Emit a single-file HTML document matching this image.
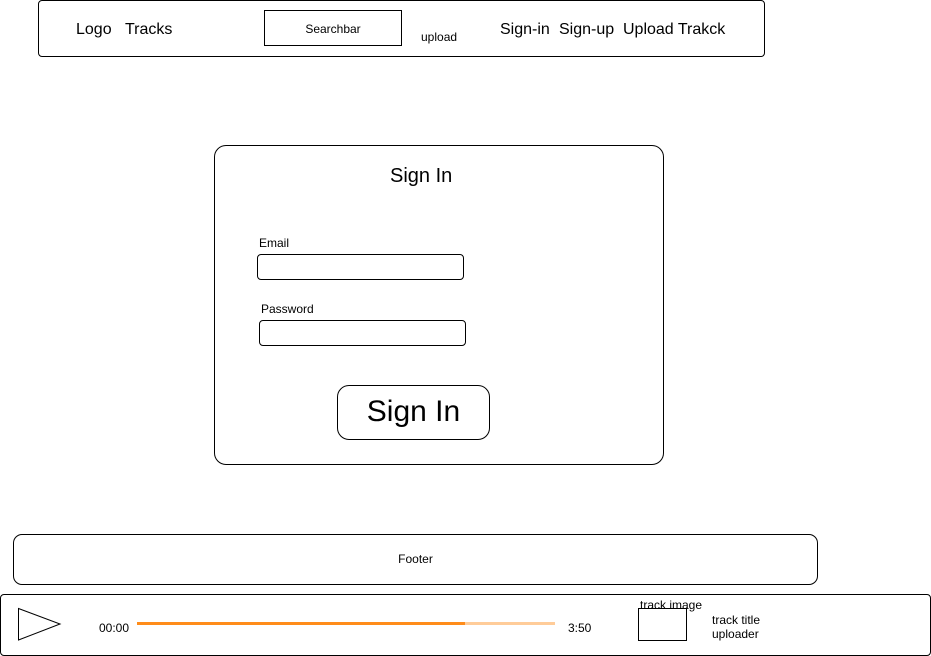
<!DOCTYPE html>
<html><head><meta charset="utf-8"><style>
*{margin:0;padding:0;box-sizing:border-box}
body{width:931px;height:656px;background:#fff;position:relative;font-family:"Liberation Sans",Arial,sans-serif;color:#000;overflow:hidden}
.a{position:absolute}
.b{position:absolute;border:1px solid #000;background:#fff}
.t{position:absolute;white-space:nowrap}
</style></head><body>
<div class="b" style="left:38px;top:0;width:727px;height:57px;border-radius:4px"></div>
<div class="t" style="left:76px;top:21px;font-size:16px">Logo</div>
<div class="t" style="left:125px;top:21px;font-size:16px">Tracks</div>
<div class="b" style="left:264px;top:10px;width:138px;height:36px"></div>
<div class="t" style="left:264px;top:22px;width:138px;text-align:center;font-size:12px">Searchbar</div>
<div class="t" style="left:421px;top:30px;font-size:12px">upload</div>
<div class="t" style="left:500px;top:21px;font-size:16px">Sign-in</div>
<div class="t" style="left:559px;top:21px;font-size:16px">Sign-up</div>
<div class="t" style="left:623px;top:21px;font-size:16px">Upload Trakck</div>

<div class="b" style="left:214px;top:145px;width:450px;height:320px;border-radius:12px"></div>
<div class="t" style="left:390px;top:165px;font-size:20px">Sign In</div>
<div class="t" style="left:259px;top:236px;font-size:12px">Email</div>
<div class="b" style="left:257px;top:254px;width:207px;height:26px;border-radius:4px"></div>
<div class="t" style="left:261px;top:302px;font-size:12px">Password</div>
<div class="b" style="left:259px;top:320px;width:207px;height:26px;border-radius:4px"></div>
<div class="b" style="left:337px;top:385px;width:153px;height:55px;border-radius:12px"></div>
<div class="t" style="left:337px;top:395px;width:153px;text-align:center;font-size:30px">Sign In</div>

<div class="b" style="left:13px;top:534px;width:805px;height:51px;border-radius:9px"></div>
<div class="t" style="left:13px;top:552px;width:805px;text-align:center;font-size:12px">Footer</div>

<div class="b" style="left:0;top:594px;width:931px;height:62px;border-radius:4px"></div>
<svg class="a" style="left:17px;top:607px" width="46" height="35"><polygon points="1.5,1.5 43,17 1.5,33" fill="none" stroke="#000" stroke-width="1"/></svg>
<div class="t" style="left:99px;top:621px;font-size:12px">00:00</div>
<div class="a" style="left:137px;top:622px;width:418px;height:3px;background:#ffcc99"></div>
<div class="a" style="left:137px;top:622px;width:328px;height:3px;background:#ff8c1a"></div>
<div class="t" style="left:568px;top:621px;font-size:12px">3:50</div>
<div class="t" style="left:640px;top:598px;font-size:12px">track image</div>
<div class="b" style="left:638px;top:608px;width:49px;height:33px"></div>
<div class="t" style="left:712px;top:613px;font-size:12px">track title</div>
<div class="t" style="left:712px;top:627px;font-size:12px">uploader</div>
</body></html>
